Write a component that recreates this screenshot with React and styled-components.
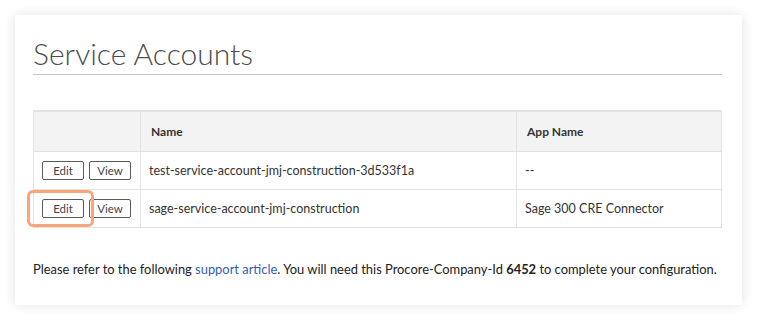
import React from "react";
import styled, { createGlobalStyle } from "styled-components";

const Global = createGlobalStyle`
  html, body { margin: 0; padding: 0; background: #ffffff; }
  body { font-family: Lato, "Open Sans", sans-serif; color: #232323; }
`;

const Page = styled.div`
  padding: 15px 15px 16px 15px;
  width: 757px;
  box-sizing: border-box;
`;

const Card = styled.div`
  background: #fff;
  box-shadow: 0 0 12px rgba(0, 0, 0, 0.11);
  padding: 17px 20px 24px 18px;
  height: 290px;
  box-sizing: border-box;
`;

const Title = styled.h1`
  margin: 0;
  font-family: Lato, sans-serif;
  font-weight: 300;
  font-size: 30px;
  line-height: 40px;
  color: #4d4d4d;
  padding-top: 1px;
  padding-bottom: 1px;
  border-bottom: 1px solid #c6c6c6;
`;

const Table = styled.table`
  margin-top: 35px;
  width: 100%;
  border-collapse: collapse;
  font-size: 12.5px;
  border-top: 2px solid #e2e2e2;
`;

const Th = styled.th`
  background: #f3f3f3;
  text-align: left;
  font-weight: 700;
  font-size: 12px;
  color: #333;
  height: 40px;
  padding: 0 10px;
  border: 1px solid #e2e2e2;
  border-top: none;
  width: ${(p) => p.$w || "auto"};
  box-sizing: border-box;
`;

const Td = styled.td`
  height: 38px;
  padding: 0 8px;
  border: 1px solid #e2e2e2;
  color: #333;
  box-sizing: border-box;
  position: relative;
`;

const Actions = styled.div`
  display: flex;
  gap: 5px;
`;

const Button = styled.button`
  font-family: Lato, sans-serif;
  font-size: 11.5px;
  color: #444;
  background: #fff;
  border: 1px solid #5a5a5a;
  border-radius: 2px;
  width: ${(p) => p.$w}px;
  height: 19px;
  padding: 0;
  display: flex;
  align-items: center;
  justify-content: center;
`;

const Highlight = styled.div`
  position: absolute;
  left: -7px;
  top: 0px;
  width: 67px;
  height: 37px;
  box-sizing: border-box;
  border: 3px solid #f9a57c;
  border-radius: 6px;
  pointer-events: none;
`;

const Note = styled.p`
  margin: 33px 0 0 0;
  font-size: 12.9px;
  white-space: nowrap;
  color: #222;
`;

const Link = styled.a`
  color: #2f5eb4;
  text-decoration: none;
`;

const rows = [
  { name: "test-service-account-jmj-construction-3d533f1a", app: "--" },
  { name: "sage-service-account-jmj-construction", app: "Sage 300 CRE Connector", hl: true },
];

export default function App() {
  return (
    <Page>
      <Global />
      <Card>
        <Title>Service Accounts</Title>
        <Table>
          <thead>
            <tr>
              <Th $w="107px"></Th>
              <Th $w="376px">Name</Th>
              <Th>App Name</Th>
            </tr>
          </thead>
          <tbody>
            {rows.map((r) => (
              <tr key={r.name}>
                <Td>
                  {r.hl && <Highlight />}
                  <Actions>
                    <Button $w={42}>Edit</Button>
                    <Button $w={42}>View</Button>
                  </Actions>
                </Td>
                <Td>{r.name}</Td>
                <Td>{r.app}</Td>
              </tr>
            ))}
          </tbody>
        </Table>
        <Note>
          Please refer to the following <Link href="#">support article</Link>. You will need this
          Procore-Company-Id <b>6452</b> to complete your configuration.
        </Note>
      </Card>
    </Page>
  );
}
